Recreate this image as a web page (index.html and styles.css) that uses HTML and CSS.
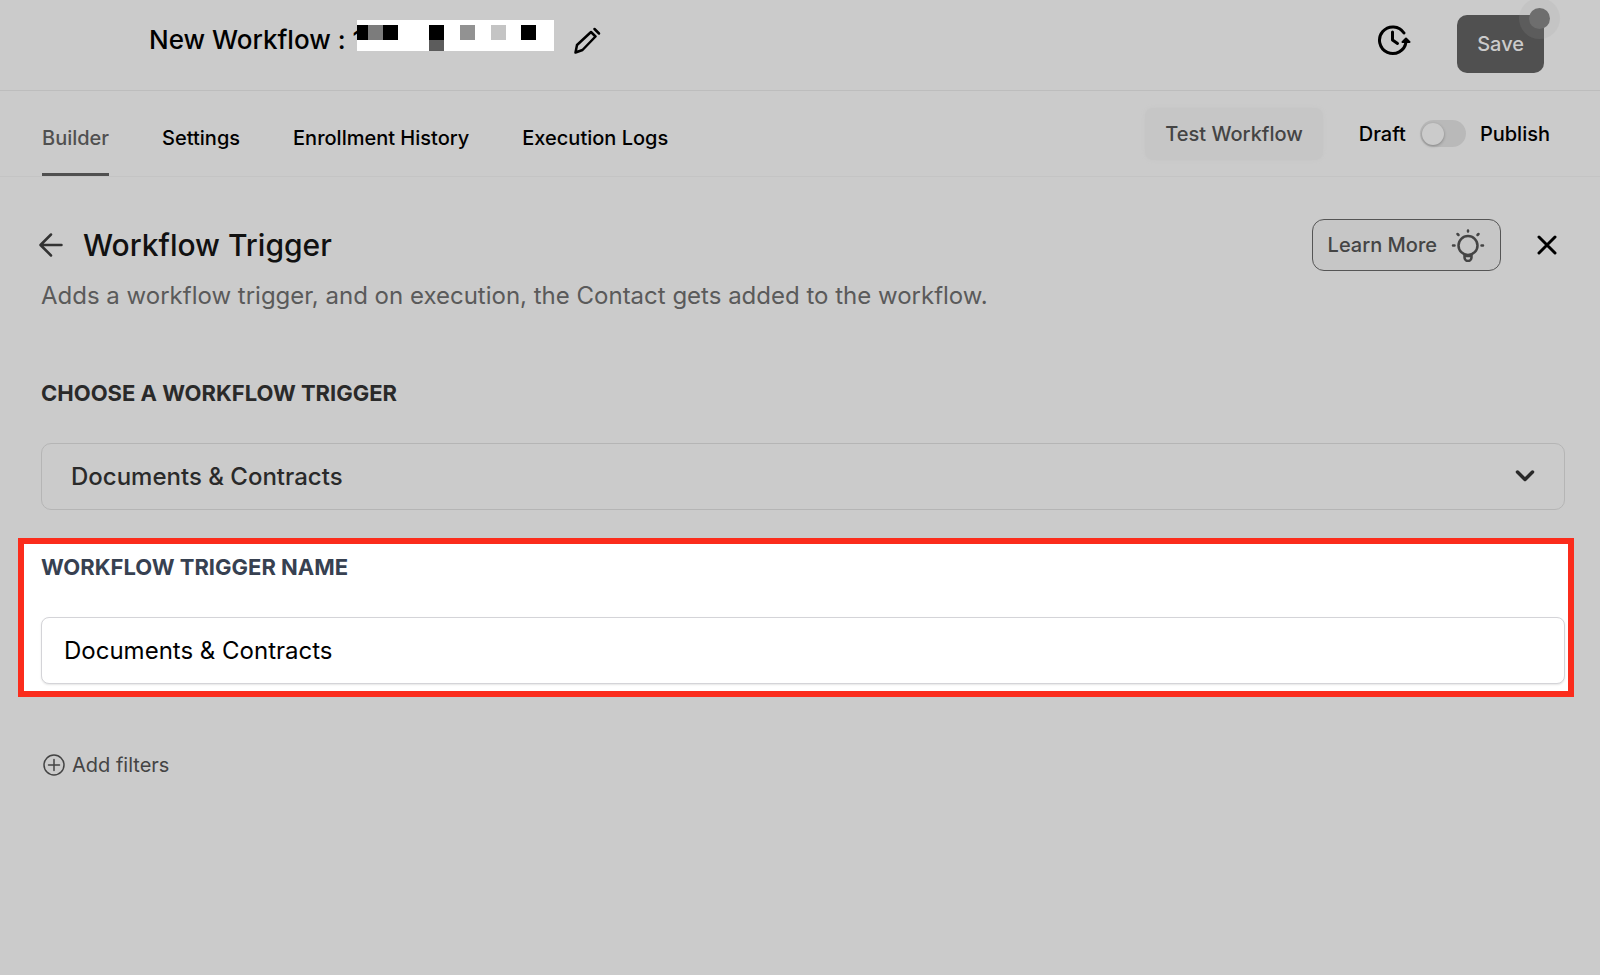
FILE: index.html
```html
<!DOCTYPE html>
<html lang="en">

<head>
    <meta charset="UTF-8">
    <meta name="viewport" content="width=device-width, initial-scale=1.0">
    <title>Workflow Trigger</title>
    <link rel="stylesheet" href="styles.css">
</head>

<body>
    <!-- Top bar -->
    <header class="topbar">
        <div class="workflow-title">
            <h1>New Workflow : <span class="title-clip">1</span></h1>
            <svg class="masked-name" width="197" height="31" viewBox="0 0 197 31" aria-hidden="true">
                <rect width="197" height="31" fill="#fff"/>
                <rect y="5" width="11" height="15" fill="#000"/>
                <rect x="11" y="5" width="15" height="15" fill="#7c7c7c"/>
                <rect x="26" y="5" width="15" height="15" fill="#000"/>
                <rect x="72" y="5" width="15" height="15" fill="#000"/>
                <rect x="72" y="20" width="15" height="11" fill="#5c5c5c"/>
                <rect x="103" y="5" width="15" height="15" fill="#929292"/>
                <rect x="134" y="5" width="15" height="15" fill="#c4c4c4"/>
                <rect x="164" y="5" width="15" height="15" fill="#000"/>
            </svg>
            <button type="button" class="icon-btn" aria-label="Rename workflow">
                <svg width="27" height="27" viewBox="0 0 27 27" fill="none" stroke="#000" stroke-width="2.500" stroke-linecap="round" stroke-linejoin="round">
                    <path d="M1.500 25.500l1.500-7.500L17 5l4.500 4.500L8.500 23z"/>
                    <path d="M20.500 2l4.500 4.500"/>
                </svg>
            </button>
        </div>
        <div class="topbar-actions">
            <button type="button" class="icon-btn" aria-label="Version history">
                <svg width="34" height="32" viewBox="0 0 34 32" fill="none" stroke="#000" stroke-width="3" stroke-linecap="round" stroke-linejoin="round">
                    <path d="M27 9A13.300 13.300 0 1 0 29 18"/>
                    <path d="M15.500 8v8l5 3.500"/>
                    <path d="M29 14.500l-3.500 3.500h7z" fill="#000" stroke-width="2"/>
                </svg>
            </button>
            <button type="button" class="save-btn">Save<span class="save-dot"></span></button>
        </div>
    </header>

    <!-- Tabs -->
    <div class="tabbar">
        <nav class="tabs">
            <a href="#" class="tab active">Builder</a>
            <a href="#" class="tab">Settings</a>
            <a href="#" class="tab">Enrollment History</a>
            <a href="#" class="tab">Execution Logs</a>
        </nav>
        <div class="tabbar-actions">
            <button type="button" class="test-btn">Test Workflow</button>
            <label class="publish">
                <span>Draft</span>
                <input type="checkbox" class="switch">
                <span>Publish</span>
            </label>
        </div>
    </div>

    <!-- Trigger panel -->
    <main class="panel">
        <div class="panel-head">
            <button type="button" class="icon-btn" aria-label="Back">
                <svg width="24" height="24" viewBox="0 0 24 24" fill="none" stroke="#333" stroke-width="2.500" stroke-linecap="round" stroke-linejoin="round">
                    <path d="M22.500 12H2M12 1.500L1.500 12L12 22.500"/>
                </svg>
            </button>
            <h2>Workflow Trigger</h2>
            <button type="button" class="learn-btn">
                Learn More
                <svg width="34" height="34" viewBox="0 0 34 34" fill="none" stroke="#444" stroke-width="2.500" stroke-linecap="round">
                    <circle cx="17" cy="17.500" r="9.500"/>
                    <path d="M13.500 27v2.500a3.500 3.500 0 0 0 7 0V27M14 28h6"/>
                    <path d="M17 2.500v1M6.500 6l1 1M27.500 6l-1 1M2 17.500h1.500M30.500 17.500h1.500"/>
                </svg>
            </button>
            <button type="button" class="icon-btn" aria-label="Close">
                <svg width="20" height="20" viewBox="0 0 20 20" fill="none" stroke="#000" stroke-width="3" stroke-linecap="round">
                    <path d="M2 2l16 16M18 2L2 18"/>
                </svg>
            </button>
        </div>
        <p class="panel-desc">Adds a workflow trigger, and on execution, the Contact gets added to the workflow.</p>

        <div class="field">
            <label for="trigger">Choose a workflow trigger</label>
            <div class="select-wrap">
                <select id="trigger">
                    <option>Documents &amp; Contracts</option>
                </select>
                <svg class="chevron" width="20" height="14" viewBox="0 0 20 14" fill="none" stroke="#2a2a2a" stroke-width="3.500" stroke-linecap="round" stroke-linejoin="round">
                    <path d="M2.500 3L10 10.500L17.500 3"/>
                </svg>
            </div>
        </div>

        <div class="field highlight">
            <label for="triggerName">Workflow trigger name</label>
            <input type="text" id="triggerName" value="Documents &amp; Contracts">
        </div>

        <button type="button" class="add-btn">
            <svg width="22" height="22" viewBox="0 0 22 22" fill="none" stroke="#444" stroke-width="1.500" stroke-linecap="round">
                <circle cx="11" cy="11" r="10"/>
                <path d="M11 5.500v11M5.500 11h11"/>
            </svg>
            Add filters
        </button>
    </main>
</body>

</html>
```

FILE: styles.css
```css
* {
    box-sizing: border-box;
}

body {
    font-family: Inter, "Liberation Sans", sans-serif;
    font-size: 20px;
    line-height: 24px;
    background-color: #cbcbcb;
    color: #000;
    margin: 0;
}

h1,
h2,
p {
    margin: 0;
}

button {
    font: inherit;
    border: none;
    background: none;
    padding: 0;
    cursor: pointer;
}

svg {
    display: block;
}

/* Top bar */
.topbar {
    display: flex;
    justify-content: space-between;
    height: 91px;
    padding: 0 56px 0 149px;
    border-bottom: 1px solid #bdbdbd;
}

.workflow-title {
    display: flex;
    align-items: center;
    height: 80px;
}

.workflow-title h1 {
    font-size: 26px;
    line-height: 32px;
    font-weight: 500;
}

/* the rest of the name is covered by the mask */
.title-clip {
    display: inline-block;
    width: 5px;
}

.masked-name {
    position: relative;
    align-self: flex-start;
    margin: 20px 20px 0 0;
}

.topbar-actions {
    display: flex;
    align-items: flex-start;
    gap: 46px;
    padding-top: 15px;
}

.topbar-actions .icon-btn {
    margin-top: 9px;
}

.save-btn {
    position: relative;
    height: 58px;
    padding: 0 20px;
    border-radius: 10px;
    background-color: #505050;
    color: #cbcbcb;
    font-weight: 500;
}

.save-dot {
    position: absolute;
    top: -7px;
    right: -6px;
    width: 21px;
    height: 21px;
    border-radius: 50%;
    background-color: #6e6e6e;
    box-shadow: 0 0 0 10px rgba(160, 160, 160, 0.15);
}

/* Tabs */
.tabbar {
    display: flex;
    justify-content: space-between;
    height: 86px;
    padding: 0 50px 0 42px;
    border-bottom: 1px solid #c4c4c4;
}

.tabs {
    display: flex;
    gap: 53px;
}

.tab {
    padding-top: 35px;
    border-bottom: 3px solid transparent;
    color: #000;
    font-weight: 500;
    text-decoration: none;
}

.tab.active {
    color: #505050;
    border-bottom-color: #505050;
}

.tabbar-actions {
    display: flex;
    align-items: center;
    gap: 36px;
    height: 85px;
}

.test-btn {
    height: 52px;
    padding: 0 20px;
    border-radius: 8px;
    background-color: #c6c6c6;
    box-shadow: 0 0 4px #c6c6c6;
    color: #444;
    font-weight: 500;
}

.publish {
    display: flex;
    align-items: center;
    gap: 14px;
    font-weight: 500;
}

.switch {
    appearance: none;
    display: flex;
    align-items: center;
    width: 46px;
    height: 27px;
    margin: 0;
    padding: 2px;
    border-radius: 14px;
    background-color: #b9b9b9;
}

.switch::before {
    content: "";
    width: 22px;
    height: 22px;
    border-radius: 50%;
    background-color: #cbcbcb;
    box-shadow: 0 1px 3px rgba(0, 0, 0, 0.3);
}

.switch:checked {
    justify-content: flex-end;
}

/* Trigger panel */
.panel {
    padding: 42px 26px 40px 18px;
}

.panel-head {
    display: flex;
    align-items: center;
    padding: 0 17px 0 21px;
}

.panel-head h2 {
    flex: 1;
    margin-left: 20px;
    font-size: 30px;
    line-height: 40px;
    font-weight: 500;
    color: #111;
}

.learn-btn {
    display: flex;
    align-items: center;
    gap: 14px;
    height: 52px;
    margin-right: 36px;
    padding: 0 15px;
    border: 1px solid #555;
    border-radius: 12px;
    background-color: #c6c6c6;
    color: #444;
    font-weight: 500;
}

.panel-desc {
    margin: 8px 23px 66px;
    font-size: 24px;
    line-height: 34px;
    color: #5a5a5a;
}

.field {
    padding: 0 9px 0 23px;
}

.field label {
    display: block;
    margin-bottom: 36px;
    font-size: 22px;
    line-height: 28px;
    font-weight: 700;
    text-transform: uppercase;
    color: #2a2a2a;
}

.select-wrap {
    position: relative;
}

select,
input[type="text"] {
    display: block;
    width: 100%;
    height: 67px;
    font-family: inherit;
    font-size: 24px;
}

select {
    appearance: none;
    padding: 0 29px;
    border: 1px solid #b5b5b5;
    border-radius: 10px;
    background-color: transparent;
    color: #2a2a2a;
    font-weight: 500;
}

input[type="text"] {
    padding: 0 22px;
    border: 1px solid #d4d4d8;
    border-radius: 8px;
    background-color: #fff;
    box-shadow: 0 1px 2px rgba(0, 0, 0, 0.1);
    color: #000;
}

.chevron {
    position: absolute;
    top: 26px;
    right: 30px;
    pointer-events: none;
}

.highlight {
    margin-top: 28px;
    padding: 9px 3px 7px 17px;
    border: 6px solid #fb2c1c;
    background-color: #fff;
}

.highlight label {
    color: #374151;
}

.add-btn {
    display: flex;
    align-items: center;
    gap: 7px;
    margin: 56px 0 0 25px;
    color: #444;
}
```
